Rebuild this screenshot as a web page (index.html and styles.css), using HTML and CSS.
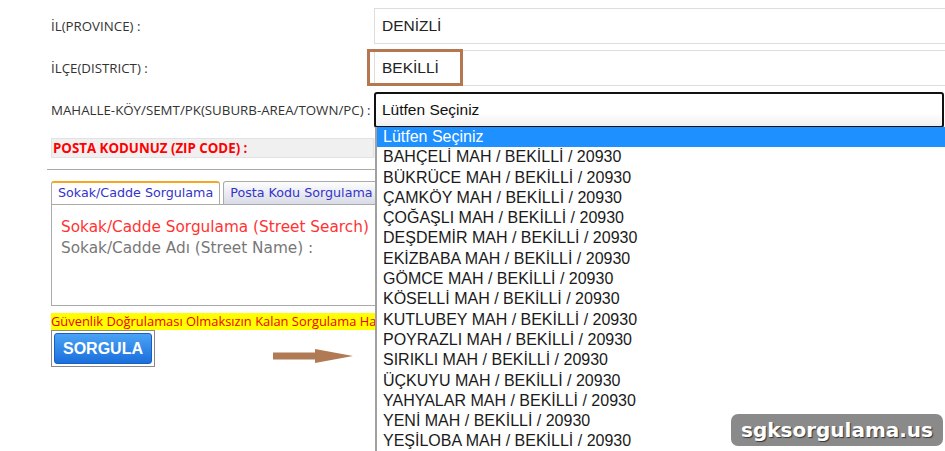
FILE: index.html
```html
<!DOCTYPE html>
<html lang="tr">
<head>
  <meta charset="UTF-8" />
  <title>Posta Kodu Sorgulama</title>
  <link rel="stylesheet" href="styles.css">
</head>
<body>
  <div class="page">
    <div class="form">
      <div class="row">
        <label class="label">İL(PROVINCE) :</label>
        <div class="field">DENİZLİ</div>
      </div>
      <div class="row">
        <label class="label">İLÇE(DISTRICT) :</label>
        <div class="field district">
          BEKİLLİ
          <span class="mark"></span>
        </div>
      </div>
      <div class="row">
        <label class="label">MAHALLE-KÖY/SEMT/PK(SUBURB-AREA/TOWN/PC) :</label>
        <div class="select">Lütfen Seçiniz</div>
      </div>
      <div class="row zip">
        <div class="zipLabel">POSTA KODUNUZ (ZIP CODE) :</div>
        <div class="zipValue"></div>
      </div>
    </div>

    <hr class="sep">

    <!-- Tabs -->
    <div class="tabs">
      <div class="tab active">Sokak/Cadde Sorgulama</div>
      <div class="tab">Posta Kodu Sorgulama</div>
    </div>
    <div class="panel">
      <div class="panelTitle">Sokak/Cadde Sorgulama (Street Search)</div>
      <div class="panelLabel">Sokak/Cadde Adı (Street Name) :</div>
    </div>

    <div class="notice">Güvenlik Doğrulaması Olmaksızın Kalan Sorgulama Hakkınız</div>

    <div class="actions">
      <div class="btnWrap"><button class="btn">SORGULA</button></div>
      <svg class="arrow" width="80" height="16" viewBox="0 0 80 16">
        <polygon points="0,4.5 42,4.5 42,1 80,8 42,15 42,11.5 0,11.5" fill="#b07a55"/>
      </svg>
    </div>
  </div>

  <!-- open select list -->
  <ul class="options">
    <li class="on">Lütfen Seçiniz</li>
    <li>BAHÇELİ MAH / BEKİLLİ / 20930</li>
    <li>BÜKRÜCE MAH / BEKİLLİ / 20930</li>
    <li>ÇAMKÖY MAH / BEKİLLİ / 20930</li>
    <li>ÇOĞAŞLI MAH / BEKİLLİ / 20930</li>
    <li>DEŞDEMİR MAH / BEKİLLİ / 20930</li>
    <li>EKİZBABA MAH / BEKİLLİ / 20930</li>
    <li>GÖMCE MAH / BEKİLLİ / 20930</li>
    <li>KÖSELLİ MAH / BEKİLLİ / 20930</li>
    <li>KUTLUBEY MAH / BEKİLLİ / 20930</li>
    <li>POYRAZLI MAH / BEKİLLİ / 20930</li>
    <li>SIRIKLI MAH / BEKİLLİ / 20930</li>
    <li>ÜÇKUYU MAH / BEKİLLİ / 20930</li>
    <li>YAHYALAR MAH / BEKİLLİ / 20930</li>
    <li>YENİ MAH / BEKİLLİ / 20930</li>
    <li>YEŞİLOBA MAH / BEKİLLİ / 20930</li>
  </ul>

  <div class="watermark">sgksorgulama.us</div>
</body>
</html>
```

FILE: styles.css
```css
body {
  margin: 0;
  background: #fff;
  font-family: "Open Sans", sans-serif;
  overflow: hidden;
  width: 945px;
  height: 451px;
  position: relative;
}
.page {
  padding: 8px 0 0 51px;
}
/* Form rows */
.form { display: flex; flex-direction: column; gap: 6px; }
.row {
  display: grid;
  grid-template-columns: 323px 1fr;
  align-items: center;
}
.label { font-size: 13.3px; color: #333; white-space: nowrap; }
.field {
  position: relative;
  height: 34px;
  margin-right: -20px;
  border: 1px solid #ddd;
  border-right: none;
  font-family: "Liberation Sans", Arial, sans-serif;
  font-size: 15.5px;
  color: #222;
  line-height: 34px;
  padding-left: 7px;
}
.mark {
  position: absolute;
  left: -8px; top: -2px;
  width: 90px; height: 31px;
  border: 3px solid #b5774f;
}
.select {
  height: 32px;
  margin-right: 1px;
  border: 2px solid #111;
  border-radius: 3px;
  background: linear-gradient(#fff 60%, #f0f0f0);
  font-family: "Liberation Sans", Arial, sans-serif;
  font-size: 15.5px;
  line-height: 32px;
  padding-left: 6px;
  color: #111;
}
.zip { margin-top: 4px; }
.zipLabel {
  background: #f0f0f0;
  border: 1px solid #e2e2e2;
  color: #f00;
  font-weight: bold;
  font-size: 13.3px;
  height: 18px;
  line-height: 18px;
  padding-left: 1px;
  white-space: nowrap;
}
.zipValue { height: 20px; background: #f0f0f0; }
.sep {
  margin: 11px 570px 0 -4px;
  border: none;
  border-top: 1px solid #aaa;
}
/* Tabs */
.tabs { display: flex; gap: 3px; margin-top: 11px; }
.tab {
  font-family: "DejaVu Sans", Verdana, sans-serif;
  font-size: 12.7px;
  color: #33c;
  padding: 3px 6px 4px;
  border: 1px solid #aaa;
  border-bottom: none;
  border-radius: 3px 3px 0 0;
  background: linear-gradient(#fdfdfd, #d8dbe6);
  white-space: nowrap;
}
.tab.active {
  background: #fff;
  border-top: 2px solid #f5a623;
  padding-top: 2px;
}
.panel {
  width: 325px;
  height: 102px;
  border: 1px solid #aaa;
  padding: 0 9px;
  box-sizing: border-box;
  font-family: "DejaVu Sans", Verdana, sans-serif;
  font-size: 15.3px;
  line-height: 21px;
  white-space: nowrap;
}
.panelTitle { color: #f33; margin-top: 12px; }
.panelLabel { color: #777; }
.notice {
  margin-top: 7px;
  white-space: nowrap;
  background: #ffff00;
  color: #e00;
  font-size: 12.9px;
  height: 17px;
  line-height: 17px;
}
/* Button + arrow */
.actions { display: flex; align-items: flex-end; }
.btnWrap {
  border: 1px solid #888;
  padding: 2px;
  width: 98px;
}
.btn {
  display: block;
  width: 100%;
  height: 31px;
  border: 1px solid #1a5fc0;
  border-radius: 3px;
  background: linear-gradient(#4aa3f5, #1a6fdc);
  color: #fff;
  font-family: "Liberation Sans", Arial, sans-serif;
  font-weight: bold;
  font-size: 16px;
}
.arrow { margin: 0 0 3px 118px; }
/* Open dropdown list */
.options {
  position: absolute;
  left: 375px; top: 127px;
  width: 575px;
  height: 330px;
  margin: 0;
  padding: 0;
  list-style: none;
  background: #fff;
  border-left: 2px solid #a0a0a0;
  font-family: "Liberation Sans", Arial, sans-serif;
  font-size: 16px;
  color: #1a1a1a;
}
.options li {
  height: 20.3px;
  line-height: 20.3px;
  padding-left: 6px;
}
.options li.on { background: #1e90ff; color: #fff; }
.watermark {
  position: absolute;
  left: 731px; top: 414px;
  width: 212px; height: 32px;
  border-radius: 7px;
  background: #8a8a8a;
  color: #fff;
  font-family: "DejaVu Sans", Verdana, sans-serif;
  font-weight: bold;
  font-size: 20px;
  line-height: 32px;
  text-align: center;
  text-shadow: 1px 1px 1px #333;
}
```
